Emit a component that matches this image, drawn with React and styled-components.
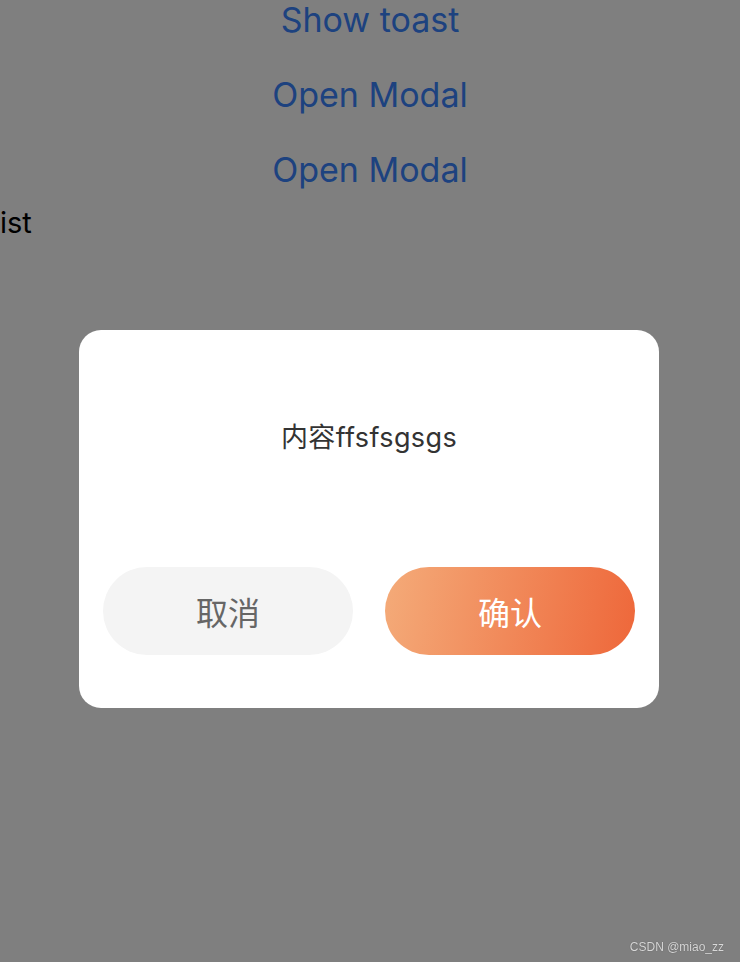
import React from 'react';
import styled, { createGlobalStyle } from 'styled-components';

const GlobalStyle = createGlobalStyle`
  html, body {
    margin: 0;
    padding: 0;
    background: #ffffff;
    font-family: Inter, "Noto Sans CJK SC", sans-serif;
  }
`;

const Page = styled.div`
  display: flex;
  flex-direction: column;
  height: 962px;
`;

const LinkButton = styled.div`
  height: 75px;
  display: flex;
  align-items: center;
  justify-content: center;
  font-size: 34px;
  color: #3b84ff;
  margin-top: ${({ first }) => (first ? '-18px' : '0')};
`;

const ListText = styled.div`
  font-size: 29px;
  color: #000;
  line-height: 36px;
  margin-top: -2px;
`;

const Mask = styled.div`
  position: fixed;
  inset: 0;
  background: rgba(0, 0, 0, 0.5);
  display: flex;
  justify-content: center;
  align-items: flex-start;
  padding-top: 330px;
  padding-right: 2px;
`;

const Dialog = styled.div`
  width: 580px;
  height: 378px;
  box-sizing: border-box;
  background: #fff;
  border-radius: 22px;
  display: flex;
  flex-direction: column;
  padding: 0 24px;
`;

const Content = styled.div`
  padding-top: 90px;
  height: 237px;
  box-sizing: border-box;
  text-align: center;
  font-size: 27px;
  letter-spacing: 0.4px;
  line-height: 36px;
  color: #333;
`;

const Footer = styled.div`
  display: flex;
  gap: 32px;
`;

const Button = styled.div`
  flex: 1;
  height: 88px;
  border-radius: 44px;
  display: flex;
  align-items: center;
  justify-content: center;
  font-size: 32px;
  color: ${({ primary }) => (primary ? '#fff' : '#666')};
  background: ${({ primary }) =>
    primary ? 'linear-gradient(100deg, #f4ab79 0%, #ee673a 100%)' : '#f4f4f4'};
`;

const Watermark = styled.div`
  position: fixed;
  right: 16px;
  bottom: 8px;
  font-family: "Liberation Sans", Arial, sans-serif;
  font-size: 12px;
  color: #d8d8d8;
  text-shadow: 0 0 1px rgba(0, 0, 0, 0.4);
`;

export default function App() {
  return (
    <>
      <GlobalStyle />
      <Page>
        <LinkButton first>Show toast</LinkButton>
        <LinkButton>Open Modal</LinkButton>
        <LinkButton>Open Modal</LinkButton>
        <ListText>ist</ListText>
      </Page>
      <Mask>
        <Dialog>
          <Content>内容ffsfsgsgs</Content>
          <Footer>
            <Button>取消</Button>
            <Button primary>确认</Button>
          </Footer>
        </Dialog>
      </Mask>
      <Watermark>CSDN @miao_zz</Watermark>
    </>
  );
}
